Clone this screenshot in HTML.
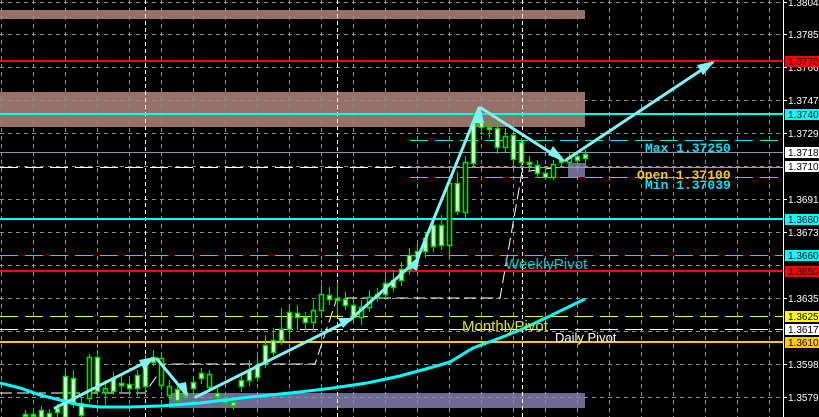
<!DOCTYPE html>
<html><head><meta charset="utf-8"><style>
html,body{margin:0;padding:0;background:#000;width:819px;height:417px;overflow:hidden}
svg{display:block}
text{font-family:"Liberation Sans",sans-serif}
.ax{font-size:10px;fill:#fff}
.mono{font-family:"Liberation Mono",monospace;font-weight:bold;font-size:13px}
</style></head><body>
<svg id="s" width="819" height="417" viewBox="0 0 819 417" xmlns="http://www.w3.org/2000/svg">
<rect width="819" height="417" fill="#000"/>
<rect x="0" y="10" width="585" height="9" fill="#977067"/>
<rect x="0" y="92" width="585" height="35" fill="#977067"/>
<rect x="169" y="393" width="416" height="15" fill="#6d6b94"/>
<rect x="568" y="163" width="17" height="14" fill="#6d6b94"/>
<g id="grid" stroke="#8a9098" stroke-width="1" stroke-dasharray="4,4"></g>
<g stroke="#fff" stroke-width="1" stroke-dasharray="4,3">
<line x1="145.5" y1="0" x2="145.5" y2="417"/>
<line x1="337.5" y1="0" x2="337.5" y2="417"/>
<line x1="522.5" y1="0" x2="522.5" y2="417"/>
</g>
<line x1="0" y1="61" x2="783" y2="61" stroke="#ff0000" stroke-width="2"/>
<line x1="0" y1="114" x2="783" y2="114" stroke="#00ffff" stroke-width="2"/>
<line x1="0" y1="152.5" x2="783" y2="152.5" stroke="#8a9aa8" stroke-width="1"/>
<line x1="0" y1="167.5" x2="783" y2="167.5" stroke="#fff" stroke-width="1" stroke-dasharray="18,7"/>
<line x1="410" y1="167.5" x2="783" y2="167.5" stroke="#d4a000" stroke-width="1"/>
<line x1="410" y1="140.5" x2="783" y2="140.5" stroke="#00e5e5" stroke-width="1" stroke-dasharray="18,7"/>
<line x1="410" y1="177.5" x2="783" y2="177.5" stroke="#00e5e5" stroke-width="1" stroke-dasharray="18,7"/>
<line x1="0" y1="219" x2="783" y2="219" stroke="#00ffff" stroke-width="2"/>
<line x1="0" y1="255.5" x2="783" y2="255.5" stroke="#00e5e5" stroke-width="1" stroke-dasharray="18,7"/>
<line x1="0" y1="271" x2="783" y2="271" stroke="#ff0000" stroke-width="2"/>
<line x1="0" y1="316.5" x2="783" y2="316.5" stroke="#ffff00" stroke-width="1" stroke-dasharray="18,7"/>
<line x1="0" y1="329.5" x2="783" y2="329.5" stroke="#fff" stroke-width="1" stroke-dasharray="18,7"/>
<line x1="0" y1="342" x2="783" y2="342" stroke="#ffcc00" stroke-width="2"/>
<polyline points="0,393 60,393 120,393 145,393 165,364 315,364 337,298 500,298 522,172 560,167" fill="none" stroke="#fff" stroke-width="1" stroke-dasharray="12,5"/>
<g id="candles"></g>
<polyline points="0,383 20,388 40,395 60,400 80,405 100,407 130,407 160,406 200,403 250,397 300,392 333,388 367,383 400,376 433,367 450,362 473,348 500,338 520,330 550,316 585,299" fill="none" stroke="#00ffff" stroke-width="3"/>
<g stroke="#7ff5f5" stroke-width="3" fill="none" stroke-linecap="round">
<polyline points="55,408 152,359"/>
<polyline points="157,359 186,394"/>
<polyline points="196,397 350,320 417,260 479,108"/>
<polyline points="481,108 562,160"/>
<polyline points="566,160 712,63"/>
</g>
<g fill="#7ff5f5">
<polygon points="155,357 139,360 144,370"/>
<polygon points="188,397 177,384 186,382"/>
<polygon points="353,318 338,318 343,328"/>
<polygon points="420,255 408,266 417,271"/>
<polygon points="480,106 473,123 484,123"/>
<polygon points="566,162 548,155 553,146"/>
<polygon points="715,61 697,65 703,75"/>
</g>
<text x="645" y="152" class="mono" fill="#00e5ff">Max 1.37250</text>
<text x="637" y="179" class="mono" fill="#ffcc00">Open 1.37100</text>
<text x="645" y="189" class="mono" fill="#00e5ff">Min 1.37039</text>
<text x="505" y="269" font-size="15" fill="#00cccc">WeeklyPivot</text>
<text x="462" y="331" font-size="15" fill="#e6e600">MonthlyPivot</text>
<text x="555" y="342" font-size="13" fill="#fff">Daily Pivot</text>
<rect x="784" y="0" width="35" height="417" fill="#000"/>
<line x1="783.5" y1="0" x2="783.5" y2="417" stroke="#fff" stroke-width="1"/>
<g id="ax"></g>
</svg>
<script>
var ns="http://www.w3.org/2000/svg";
function el(p,t,a,txt){var e=document.createElementNS(ns,t);for(var k in a)e.setAttribute(k,a[k]);if(txt)e.textContent=txt;p.appendChild(e);return e;}
var g=document.getElementById('grid');
for(var x=1;x<783;x+=32)el(g,'line',{x1:x+.5,y1:0,x2:x+.5,y2:417});
var gy=[2,34,67,100,133,166,199,232,265,298,331,364,397];
gy.forEach(function(y){el(g,'line',{x1:0,y1:y+.5,x2:783,y2:y+.5});});
var C=[[25,416,414,410,417],[33,416,414,410,417],[41,417,410,406,417],[49,417,413,409,417],[57,412,408,404,417],[65,417,376,370,417],[73,404,378,370,408],[81,415,403,398,417],[89,357,398,354,403],[97,391,357,350,395],[105,388,392,380,405],[113,391,378,372,395],[121,385,383,376,392],[129,388,384,380,394],[137,388,375,370,396],[145,386,365,355,395],[153,362,357,350,366],[161,358,385,352,390],[169,386,395,380,400],[177,400,389,384,404],[185,392,395,386,400],[193,388,382,376,396],[201,378,373,368,384],[209,374,387,370,392],[217,396,393,388,400],[225,402,399,394,406],[233,405,402,398,410],[241,386,380,374,392],[249,380,370,360,386],[257,377,365,356,382],[265,363,345,335,368],[273,352,340,328,356],[281,340,329,308,345],[289,329,312,305,340],[297,317,313,305,330],[305,322,317,312,330],[313,310,322,300,330],[321,294,310,285,318],[329,299,295,287,305],[337,300,298,282,315],[345,305,299,292,310],[353,317,305,298,322],[361,307,317,300,325],[369,297,307,290,312],[377,297,294,288,302],[385,294,283,276,300],[393,287,280,270,292],[401,280,269,262,286],[409,269,255,248,275],[417,257,251,244,262],[425,251,238,232,258],[433,246,225,220,252],[441,245,225,215,250],[449,183,245,178,260],[457,211,183,172,215],[465,162,212,156,218],[473,163,121,112,168],[481,127,122,115,135],[489,129,127,118,138],[497,147,128,122,154],[505,136,147,128,152],[513,159,135,130,166],[521,162,142,138,170],[529,164,162,156,170],[537,173,165,160,178],[545,177,173,168,180],[553,164,177,160,180],[561,162,160,156,166],[569,157,162,152,168],[577,160,156,152,166],[585,158,154,150,166]];
var cg=document.getElementById('candles');
C.forEach(function(c){var x=c[0],o=c[1],cl=c[2],h=c[3],l=c[4];
el(cg,'line',{x1:x+.5,y1:h,x2:x+.5,y2:l,stroke:'#00e000','stroke-width':1});
var top=Math.min(o,cl),bh=Math.max(2,Math.abs(o-cl));
el(cg,'rect',{x:x-1.5,y:top+.5,width:4,height:bh,fill:(cl<o?'#fff':'#000'),stroke:'#00e000','stroke-width':1.5});});
var ax=document.getElementById('ax');
var L=[[2,'1.38040'],[34,'1.37850'],[67,'1.37665'],[100,'1.37475'],[133,'1.37290'],[199,'1.36915'],[232,'1.36730'],[298,'1.36355'],[364,'1.35980'],[397,'1.35795']];
L.forEach(function(l){el(ax,'line',{x1:783,y1:l[0]+.5,x2:787,y2:l[0]+.5,stroke:'#fff'});el(ax,'text',{x:788,y:l[0]+4,'class':'ax'},l[1]);});
var B=[[61,'#ff0000','#000','1.37700'],[114,'#00ffff','#000','1.37400'],[152,'#ffffff','#000','1.37182'],[166,'#ffffff','#000','1.37100'],[219,'#00ffff','#000','1.36800'],[255,'#00ffff','#000','1.36600'],[271,'#ff0000','#000','1.36500'],[316,'#ffff00','#000','1.36252'],[329,'#ffffff','#000','1.36175'],[342,'#ffcc00','#000','1.36100']];
B.forEach(function(b){el(ax,'rect',{x:785,y:b[0]-5,width:34,height:11,fill:b[1]});el(ax,'text',{x:788,y:b[0]+4,'class':'ax',style:'fill:'+b[2]},b[3]);});
</script>
</body></html>
